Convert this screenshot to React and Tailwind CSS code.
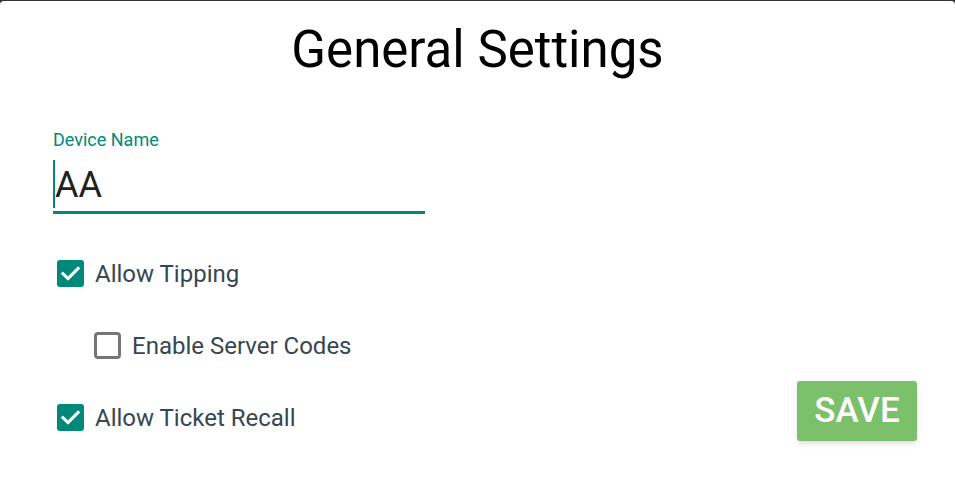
import React from 'react';

const TEAL = '#00897b';

const CheckBox = ({ checked }) => (
  <svg width="27" height="27" viewBox="0 0 27 27" className="shrink-0">
    {checked ? (
      <>
        <rect x="0" y="0" width="27" height="27" rx="3" fill={TEAL} />
        <path d="M6 13.8 L11 18.6 L21 8.6" fill="none" stroke="#fff" strokeWidth="3.2" strokeLinecap="square" />
      </>
    ) : (
      <rect x="1.5" y="1.5" width="24" height="24" rx="2.5" fill="none" stroke="#757575" strokeWidth="3" />
    )}
  </svg>
);

const Option = ({ label, checked, indent }) => (
  <div className={`flex h-[72px] items-center gap-[11px] ${indent ? 'pl-[41px]' : 'pl-[4px]'}`}>
    <CheckBox checked={checked} />
    <span className="pt-[2px] text-[24px] leading-[28px] text-[#37474f]">{label}</span>
  </div>
);

export default function App() {
  return (
    <div className="h-[477px] w-[955px] bg-[#333] pt-px" style={{ fontFamily: 'Roboto, "Noto Sans", sans-serif' }}>
      <div className="h-[476px] rounded-t-[4px] bg-white pt-[19px]">
        <h1 className="text-center text-[51px] leading-[60px] text-black">General Settings</h1>

        <div className="flex pl-[53px] pr-[38px]">
          <div className="flex flex-col">
            <label className="mt-[50px] text-[18px] leading-[20px]" style={{ color: TEAL }}>
              Device Name
            </label>
            <div className="mt-[10px] flex w-[372px] items-start">
              <div className="h-[48px] w-[2px]" style={{ backgroundColor: TEAL }} />
              <span className="text-[36px] leading-[51px] text-[#212121]">AA</span>
            </div>
            <div className="h-[3px] w-[372px]" style={{ backgroundColor: TEAL }} />

            <div className="mt-[23px] flex flex-col">
              <Option label="Allow Tipping" checked />
              <Option label="Enable Server Codes" indent />
              <Option label="Allow Ticket Recall" checked />
            </div>
          </div>

          <div className="flex flex-1 items-end justify-end pb-[12px]">
            <button className="h-[60px] w-[120px] rounded-[3px] bg-[#7cc06b] text-[35px] font-medium text-white shadow-md">
              SAVE
            </button>
          </div>
        </div>
      </div>
    </div>
  );
}
